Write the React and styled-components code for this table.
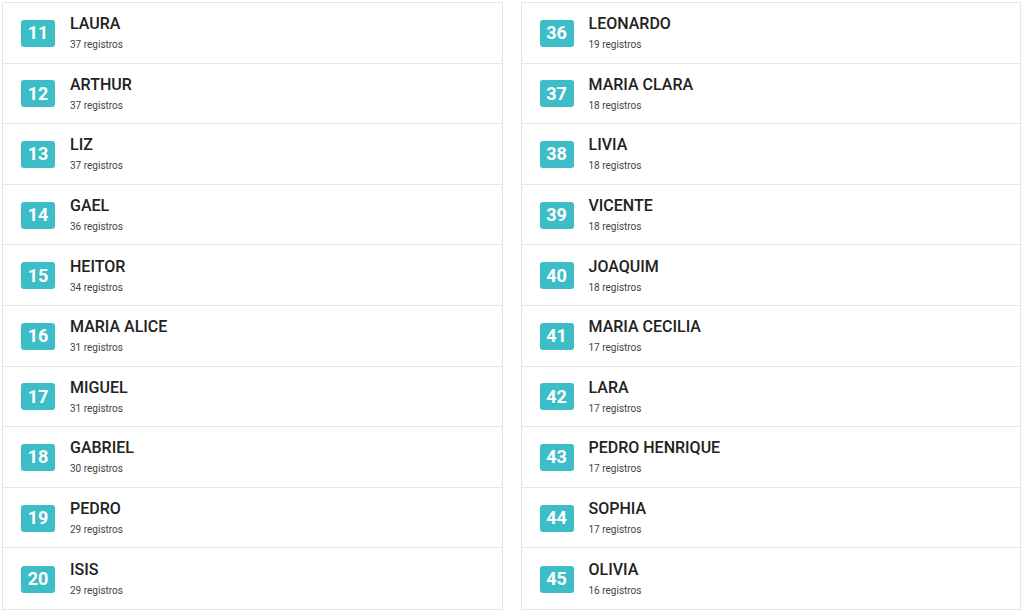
import React from 'react';
import styled, { createGlobalStyle } from 'styled-components';

const left = [
  [11, 'LAURA', 37],
  [12, 'ARTHUR', 37],
  [13, 'LIZ', 37],
  [14, 'GAEL', 36],
  [15, 'HEITOR', 34],
  [16, 'MARIA ALICE', 31],
  [17, 'MIGUEL', 31],
  [18, 'GABRIEL', 30],
  [19, 'PEDRO', 29],
  [20, 'ISIS', 29],
];

const right = [
  [36, 'LEONARDO', 19],
  [37, 'MARIA CLARA', 18],
  [38, 'LIVIA', 18],
  [39, 'VICENTE', 18],
  [40, 'JOAQUIM', 18],
  [41, 'MARIA CECILIA', 17],
  [42, 'LARA', 17],
  [43, 'PEDRO HENRIQUE', 17],
  [44, 'SOPHIA', 17],
  [45, 'OLIVIA', 16],
];

const Global = createGlobalStyle`
  html, body {
    margin: 0;
    padding: 0;
    background: #ffffff;
    font-family: Roboto, "Liberation Sans", Arial, sans-serif;
  }
  * { box-sizing: border-box; }
`;

const Pagina = styled.div`
  display: grid;
  grid-template-columns: 1fr 1fr;
  column-gap: 18px;
  padding: 2px 3px 0 2px;
  height: 610px;
  overflow: hidden;
`;

const Painel = styled.ul`
  list-style: none;
  margin: 0;
  padding: 0;
  border: 1px solid #e6e6e6;
  background: #fff;
  height: 608px;
`;

const Linha = styled.li`
  display: flex;
  align-items: center;
  height: 60.6px;
  padding-left: 18px;
  border-bottom: 1px solid #e6e6e6;

  &:last-child {
    border-bottom: none;
  }
`;

const Posicao = styled.span`
  display: flex;
  align-items: center;
  justify-content: center;
  width: 34px;
  height: 27px;
  border-radius: 3px;
  background: #3dbdc8;
  color: #fff;
  font-weight: 700;
  font-size: 18px;
  line-height: 1;
  margin-right: 15px;
  margin-top: 1px;
`;

const Texto = styled.div`
  display: flex;
  flex-direction: column;
  margin-top: 1px;
`;

const Nome = styled.span`
  font-size: 16px;
  line-height: 20px;
  font-weight: 500;
  color: #222;
`;

const Registros = styled.span`
  font-size: 10px;
  line-height: 14px;
  margin-top: 4px;
  color: #444;
`;

function Lista({ itens }) {
  return (
    <Painel>
      {itens.map(([n, nome, total]) => (
        <Linha key={n}>
          <Posicao>{n}</Posicao>
          <Texto>
            <Nome>{nome}</Nome>
            <Registros>{total} registros</Registros>
          </Texto>
        </Linha>
      ))}
    </Painel>
  );
}

export default function App() {
  return (
    <>
      <Global />
      <Pagina>
        <Lista itens={left} />
        <Lista itens={right} />
      </Pagina>
    </>
  );
}
